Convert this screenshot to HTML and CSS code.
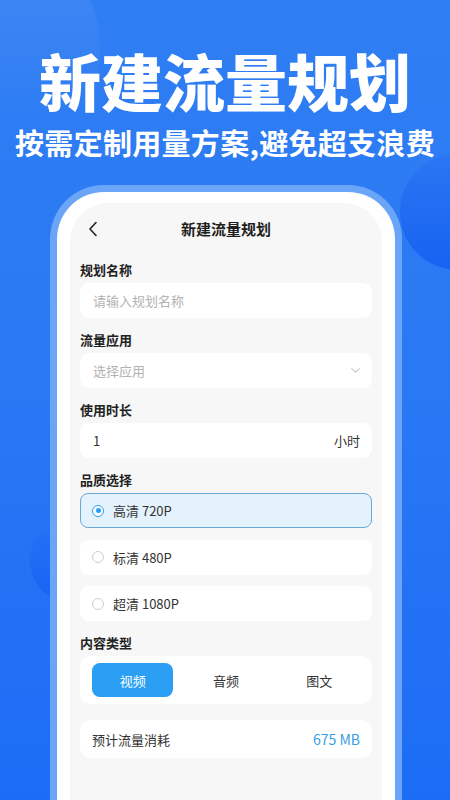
FILE: index.html
```html
<!DOCTYPE html>
<html lang="zh-CN">
<head>
<meta charset="utf-8">
<title>新建流量规划</title>
<link rel="stylesheet" href="styles.css">
</head>
<body>
<div class="page">
  <div class="blob blob-tl"></div>
  <div class="blob blob-r"></div>
  <div class="blob blob-l"></div>

  <header class="hero">
    <h1 class="hero-title">新建流量规划</h1>
    <p class="hero-sub">按需定制用量方案,避免超支浪费</p>
  </header>

  <div class="phone">
    <div class="screen">
      <div class="appbar">
        <svg class="back" width="10" height="16" viewBox="0 0 10 16"><path d="M8 1.5 L2 8 L8 14.5" fill="none" stroke="#222" stroke-width="1.6" stroke-linecap="round" stroke-linejoin="round"/></svg>
        <div class="appbar-title">新建流量规划</div>
        <span></span>
      </div>

      <div class="field">
        <div class="label">规划名称</div>
        <div class="input"><span class="placeholder">请输入规划名称</span></div>
      </div>

      <div class="field">
        <div class="label">流量应用</div>
        <div class="input">
          <span class="placeholder">选择应用</span>
          <svg width="9" height="5" viewBox="0 0 9 5"><path d="M0.7 0.7 L4.5 4.2 L8.3 0.7" fill="none" stroke="#c8c8c8" stroke-width="1.1" stroke-linecap="round" stroke-linejoin="round"/></svg>
        </div>
      </div>

      <div class="field">
        <div class="label">使用时长</div>
        <div class="input"><span class="value">1</span><span class="value">小时</span></div>
      </div>

      <div class="field">
        <div class="label">品质选择</div>
        <div class="options">
          <div class="option selected"><span class="radio"></span><span>高清 720P</span></div>
          <div class="option"><span class="radio"></span><span>标清 480P</span></div>
          <div class="option"><span class="radio"></span><span>超清 1080P</span></div>
        </div>
      </div>

      <div class="field">
        <div class="label">内容类型</div>
        <div class="segment">
          <div class="seg active">视频</div>
          <div class="seg">音频</div>
          <div class="seg">图文</div>
        </div>
      </div>

      <div class="result">
        <span>预计流量消耗</span>
        <span class="result-value">675 MB</span>
      </div>
    </div>
  </div>
</div>
</body>
</html>
```

FILE: styles.css
```css
* { box-sizing: border-box; }

html, body {
  margin: 0;
  padding: 0;
}

body {
  font-family: "Noto Sans CJK SC", "Noto Sans", sans-serif;
  color: #222;
}

.page {
  position: relative;
  width: 450px;
  height: 800px;
  overflow: hidden;
  background: linear-gradient(180deg, #2f7ef3 0%, #2a79f4 45%, #1d6cf6 100%);
}

.blob {
  position: absolute;
  border-radius: 50%;
}

.blob-tl {
  left: -180px;
  top: -90px;
  width: 280px;
  height: 280px;
  background: linear-gradient(180deg, rgba(255,255,255,0.09) 0%, rgba(255,255,255,0.04) 50%, rgba(255,255,255,0) 75%);
}

.blob-r {
  left: 400px;
  top: 154px;
  width: 116px;
  height: 116px;
  background: linear-gradient(180deg, #2a76f3 0%, #1762f1 100%);
}

.blob-l {
  left: 30px;
  top: 515px;
  width: 90px;
  height: 90px;
  background: linear-gradient(180deg, rgba(24,98,244,0) 0%, rgba(24,98,244,0.9) 100%);
}

.hero {
  position: relative;
  text-align: center;
  color: #fff;
  padding-top: 49px;
}

.hero-title {
  margin: 0;
  font-size: 62px;
  line-height: 62px;
  font-weight: 900;
}

.hero-sub {
  margin: 14px 0 0;
  font-size: 29px;
  line-height: 34px;
  font-weight: 700;
  letter-spacing: 0.3px;
}

.phone {
  position: relative;
  margin: 26px 0 0 50px;
  width: 352px;
  height: 640px;
  border: 7px solid #6aa5f7;
  border-bottom: 0;
  border-radius: 54px 54px 0 0;
  background: #fff;
  padding: 11px 13px 0;
}

.screen {
  height: 100%;
  background: #f7f7f7;
  border-radius: 38px 38px 0 0;
  padding: 0 10px;
}

.appbar {
  height: 51px;
  display: grid;
  grid-template-columns: 30px 1fr 30px;
  align-items: center;
  padding-left: 8px;
}

.back {
  display: block;
}

.appbar-title {
  text-align: center;
  font-size: 15px;
  font-weight: 700;
  color: #1f1f1f;
  padding-right: 8px;
}

.field {
  margin-top: 13px;
}

.appbar + .field {
  margin-top: 7px;
}

.label {
  font-size: 13px;
  line-height: 18px;
  font-weight: 700;
  color: #222;
  margin-bottom: 4px;
}

.input {
  height: 35px;
  background: #fff;
  border-radius: 9px;
  display: flex;
  align-items: center;
  justify-content: space-between;
  padding: 0 12px 0 13px;
  font-size: 13px;
}

.placeholder {
  color: #b3b3b3;
}

.value {
  color: #333;
}

.options {
  display: flex;
  flex-direction: column;
  gap: 11.5px;
}

.option {
  height: 35px;
  background: #fff;
  border: 1px solid #fff;
  border-radius: 8px;
  display: flex;
  align-items: center;
  gap: 9px;
  padding: 0 11px;
  font-size: 13px;
  color: #333;
}

.option.selected {
  background: #e4f2fd;
  border-color: #6aa8d4;
}

.radio {
  width: 12px;
  height: 12px;
  border-radius: 50%;
  border: 1px solid #cfcfcf;
  background: #fff;
  display: flex;
  align-items: center;
  justify-content: center;
}

.option.selected .radio {
  border: 1.5px solid #2a9ff4;
}

.option.selected .radio::after {
  content: "";
  width: 5px;
  height: 5px;
  border-radius: 50%;
  background: #2a9ff4;
}

.segment {
  margin-top: 1px;
  background: #fff;
  border-radius: 10px;
  padding: 7px 12px;
  display: grid;
  grid-template-columns: repeat(3, 1fr);
  gap: 12px;
}

.seg {
  height: 34px;
  border-radius: 8px;
  display: flex;
  align-items: center;
  justify-content: center;
  font-size: 13px;
  color: #333;
}

.seg.active {
  background: #2a9ff4;
  color: #fff;
}

.result {
  margin-top: 16px;
  height: 38px;
  background: #fff;
  border-radius: 10px;
  display: flex;
  align-items: center;
  justify-content: space-between;
  padding: 0 12px;
  font-size: 13px;
  color: #333;
}

.result-value {
  color: #3a9ee0;
  font-size: 14px;
}
```
